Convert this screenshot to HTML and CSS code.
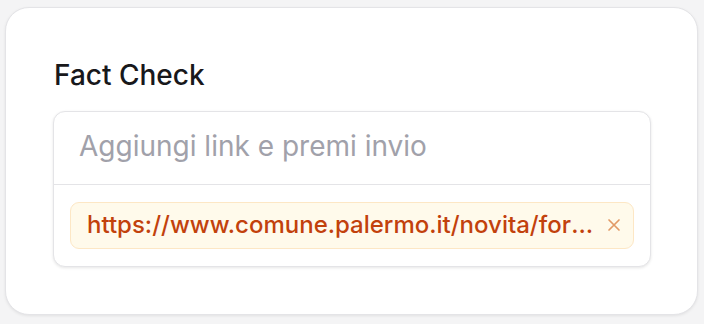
FILE: index.html
```html
<!DOCTYPE html>
<html lang="it">
<head>
<meta charset="utf-8">
<title>Fact Check</title>
<link rel="stylesheet" href="styles.css">
</head>
<body>
<div class="card">
  <h2 class="title">Fact Check</h2>
  <div class="field">
    <div class="input-row">
      <input class="input" type="text" placeholder="Aggiungi link e premi invio">
    </div>
    <div class="chips">
      <div class="chip">
        <span class="chip-text">https://www.comune.palermo.it/novita/formazione-e-lavoro-bandi-e-avvisi</span>
        <button class="chip-close" aria-label="Rimuovi">
          <svg viewBox="0 0 14 14" width="14" height="14"><path d="M2 2 L12 12 M12 2 L2 12" stroke="currentColor" stroke-width="1.7" stroke-linecap="round" fill="none"/></svg>
        </button>
      </div>
    </div>
  </div>
</div>
</body>
</html>
```

FILE: styles.css
```css
* { box-sizing: border-box; }
html, body { margin: 0; }
body {
  background: #f4f4f5;
  padding: 7px 6px 9px 5px;
  font-family: Inter, "Noto Sans", "Liberation Sans", sans-serif;
}
.card {
  background: #fff;
  border: 1px solid #e4e4e7;
  border-radius: 24px;
  box-shadow: 0 1px 3px rgba(0,0,0,0.08);
  height: 308px;
  padding: 49px 46px 0 47px;
}
.title {
  margin: 0 0 18px 1px;
  font-size: 28px;
  line-height: 36px;
  font-weight: 500;
  color: #18181b;
}
.field {
  border: 1px solid #e4e4e7;
  border-radius: 12px;
  box-shadow: 0 1px 3px rgba(0,0,0,0.10);
  background: #fff;
}
.input-row {
  border-bottom: 1px solid #e4e4e7;
}
.input {
  display: block;
  width: 100%;
  border: 0;
  outline: none;
  background: transparent;
  font-family: inherit;
  font-size: 28px;
  line-height: 36px;
  padding: 16px 25px 20px;
  color: #18181b;
}
.input::placeholder { color: #a1a1aa; }
.chips {
  padding: 17px 16px 17px;
}
.chip {
  display: flex;
  align-items: center;
  gap: 10px;
  background: #fffaeb;
  border: 1px solid #fde7c5;
  border-radius: 9px;
  padding: 7px 10px 8px 16px;
}
.chip-text {
  flex: 1;
  min-width: 0;
  overflow: hidden;
  white-space: nowrap;
  text-overflow: ellipsis;
  font-size: 24px;
  line-height: 30px;
  font-weight: 500;
  color: #c2410c;
}
.chip-close {
  display: flex;
  align-items: center;
  justify-content: center;
  width: 18px;
  height: 18px;
  padding: 0;
  border: 0;
  background: transparent;
  color: #e29a66;
}
```
